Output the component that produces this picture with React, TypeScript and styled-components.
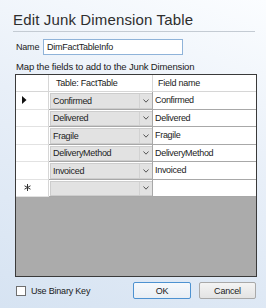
import styled, { createGlobalStyle } from "styled-components"

const GlobalStyle = createGlobalStyle`
  html, body {
    margin: 0;
    padding: 0;
  }
  body {
    font-family: "Liberation Sans", Arial, sans-serif;
    color: #1a1a1a;
  }
`

const Dialog = styled.div`
  width: 266px;
  height: 308px;
  box-sizing: border-box;
  padding: 11px 9px 0 13px;
  display: flex;
  flex-direction: column;
  background: linear-gradient(200deg, #fbfdff 0%, #e8eff8 45%, #d6e3f2 100%);
  overflow: hidden;
`

const Title = styled.h1`
  margin: 0 2px 0 0;
  padding-bottom: 2px;
  font-size: 15px;
  line-height: 18px;
  font-weight: normal;
  color: #2e2e2e;
  border-bottom: 1px solid #c4cbd3;
  letter-spacing: 0.15px;
`

const NameRow = styled.div`
  display: flex;
  align-items: center;
  margin-top: 7px;
  padding-left: 3px;
  height: 16px;
`

const Label = styled.span`
  font-size: 9px;
  letter-spacing: -0.2px;
  width: 27px;
`

const NameInput = styled.div`
  box-sizing: border-box;
  width: 140px;
  height: 16px;
  border: 1px solid #8fb3d9;
  background: #fff;
  padding-left: 3px;
  font-size: 9px;
  letter-spacing: -0.25px;
  line-height: 14px;
`

const Hint = styled.div`
  margin-top: 6px;
  padding-left: 3px;
  font-size: 9.5px;
  line-height: 12px;
  letter-spacing: -0.15px;
`

const Grid = styled.div`
  margin: 1px 0 0 2px;
  height: 203px;
  box-sizing: border-box;
  border: 1px solid #3a3a3a;
  background: #ababab;
  display: grid;
  grid-template-columns: 33px 104px 1fr;
  grid-template-rows: 17px repeat(6, 17.5px);
  align-content: start;
`

const HeadCell = styled.div<{ $last?: boolean; $pad?: number }>`
  background: #fff;
  border-right: ${(p) => (p.$last ? "none" : "1px solid #d6d6d6")};
  border-bottom: 1px solid #d6d6d6;
  font-size: 9px;
  letter-spacing: -0.25px;
  display: flex;
  align-items: center;
  padding-left: ${(p) => p.$pad ?? 0}px;
  box-sizing: border-box;
`

const RowHead = styled.div`
  background: #fff;
  border-right: 1px solid #d6d6d6;
  border-bottom: 1px solid #e2e2e2;
  box-sizing: border-box;
  display: flex;
  align-items: center;
  padding-left: 6px;
`

const ComboCell = styled.div`
  box-sizing: border-box;
  border-right: 1px solid #a8a8a8;
  border-bottom: 1px solid #a8a8a8;
  background: #fff;
  padding: 1px 0 0 1px;
  display: flex;
`

const Combo = styled.div`
  flex: 1;
  display: flex;
  background: #e2e2e2;
  border: 1px solid #cdcdcd;
  border-right: none;
  font-size: 9px;
  letter-spacing: -0.3px;
  color: #222;
`

const ComboText = styled.span`
  flex: 1;
  display: flex;
  align-items: center;
  padding-left: 2px;
`

const DropButton = styled.span`
  width: 12px;
  display: flex;
  align-items: center;
  justify-content: center;
  border-left: 1px solid #d2d2d2;
`

const FieldCell = styled.div`
  box-sizing: border-box;
  background: #fff;
  border-bottom: 1px solid #a8a8a8;
  display: flex;
  align-items: center;
  padding-left: 2px;
  font-size: 9px;
  letter-spacing: -0.3px;
  color: #222;
`

const Footer = styled.div`
  margin-top: 5px;
  display: flex;
  align-items: center;
  padding-left: 3px;
  margin-right: 1px;
`

const CheckBox = styled.span`
  width: 10px;
  height: 10px;
  box-sizing: border-box;
  border: 1px solid #6f6f6f;
  background: #fff;
`

const CheckLabel = styled.span`
  margin-left: 5px;
  font-size: 9px;
  letter-spacing: -0.2px;
  flex: 1;
`

const Button = styled.button<{ $primary?: boolean; $w: number }>`
  width: ${(p) => p.$w}px;
  height: 17px;
  box-sizing: border-box;
  margin-left: ${(p) => (p.$primary ? 0 : 8)}px;
  padding: 0;
  font-family: "Liberation Sans", Arial, sans-serif;
  font-size: 9px;
  letter-spacing: -0.2px;
  color: #1a1a1a;
  border-radius: 2px;
  border: 1px solid ${(p) => (p.$primary ? "#4d92d1" : "#a9a9a9")};
  background: ${(p) =>
    p.$primary
      ? "linear-gradient(#f6f9fc, #e8eef5)"
      : "linear-gradient(#f4f4f4, #e3e3e3)"};
`

const Chevron = () => (
  <svg width="6" height="4" viewBox="0 0 6 4">
    <path d="M0.5 0.5 L3 3.2 L5.5 0.5" fill="none" stroke="#555" strokeWidth="1" />
  </svg>
)

const CurrentArrow = () => (
  <svg width="5" height="8" viewBox="0 0 5 8">
    <path d="M0 0 L4.5 4 L0 8 Z" fill="#111" />
  </svg>
)

const NewRowStar = () => (
  <svg width="7" height="7" viewBox="0 0 7 7" style={{ marginLeft: 2 }}>
    <g stroke="#333" strokeWidth="1">
      <line x1="3.5" y1="0" x2="3.5" y2="7" />
      <line x1="0.5" y1="1.8" x2="6.5" y2="5.2" />
      <line x1="0.5" y1="5.2" x2="6.5" y2="1.8" />
    </g>
  </svg>
)

const rows = ["Confirmed", "Delivered", "Fragile", "DeliveryMethod", "Invoiced"]

type RowProps = {
  name: string
  current: boolean
}

const Row = ({ name, current }: RowProps) => (
  <>
    <RowHead>{current && <CurrentArrow />}</RowHead>
    <ComboCell>
      <Combo>
        <ComboText>{name}</ComboText>
        <DropButton>
          <Chevron />
        </DropButton>
      </Combo>
    </ComboCell>
    <FieldCell>{name}</FieldCell>
  </>
)

const App = () => {
  return (
    <>
      <GlobalStyle />
      <Dialog>
        <Title>Edit Junk Dimension Table</Title>
        <NameRow>
          <Label>Name</Label>
          <NameInput>DimFactTableInfo</NameInput>
        </NameRow>
        <Hint>Map the fields to add to the Junk Dimension</Hint>
        <Grid>
          <HeadCell />
          <HeadCell $pad={7}>Table: FactTable</HeadCell>
          <HeadCell $last $pad={5}>
            Field name
          </HeadCell>
          {rows.map((name, i) => (
            <Row key={name} name={name} current={i === 0} />
          ))}
          <RowHead>
            <NewRowStar />
          </RowHead>
          <ComboCell>
            <Combo>
              <ComboText />
              <DropButton>
                <Chevron />
              </DropButton>
            </Combo>
          </ComboCell>
          <FieldCell />
        </Grid>
        <Footer>
          <CheckBox />
          <CheckLabel>Use Binary Key</CheckLabel>
          <Button $primary $w={58}>
            OK
          </Button>
          <Button $w={57}>Cancel</Button>
        </Footer>
      </Dialog>
    </>
  )
}

export default App
